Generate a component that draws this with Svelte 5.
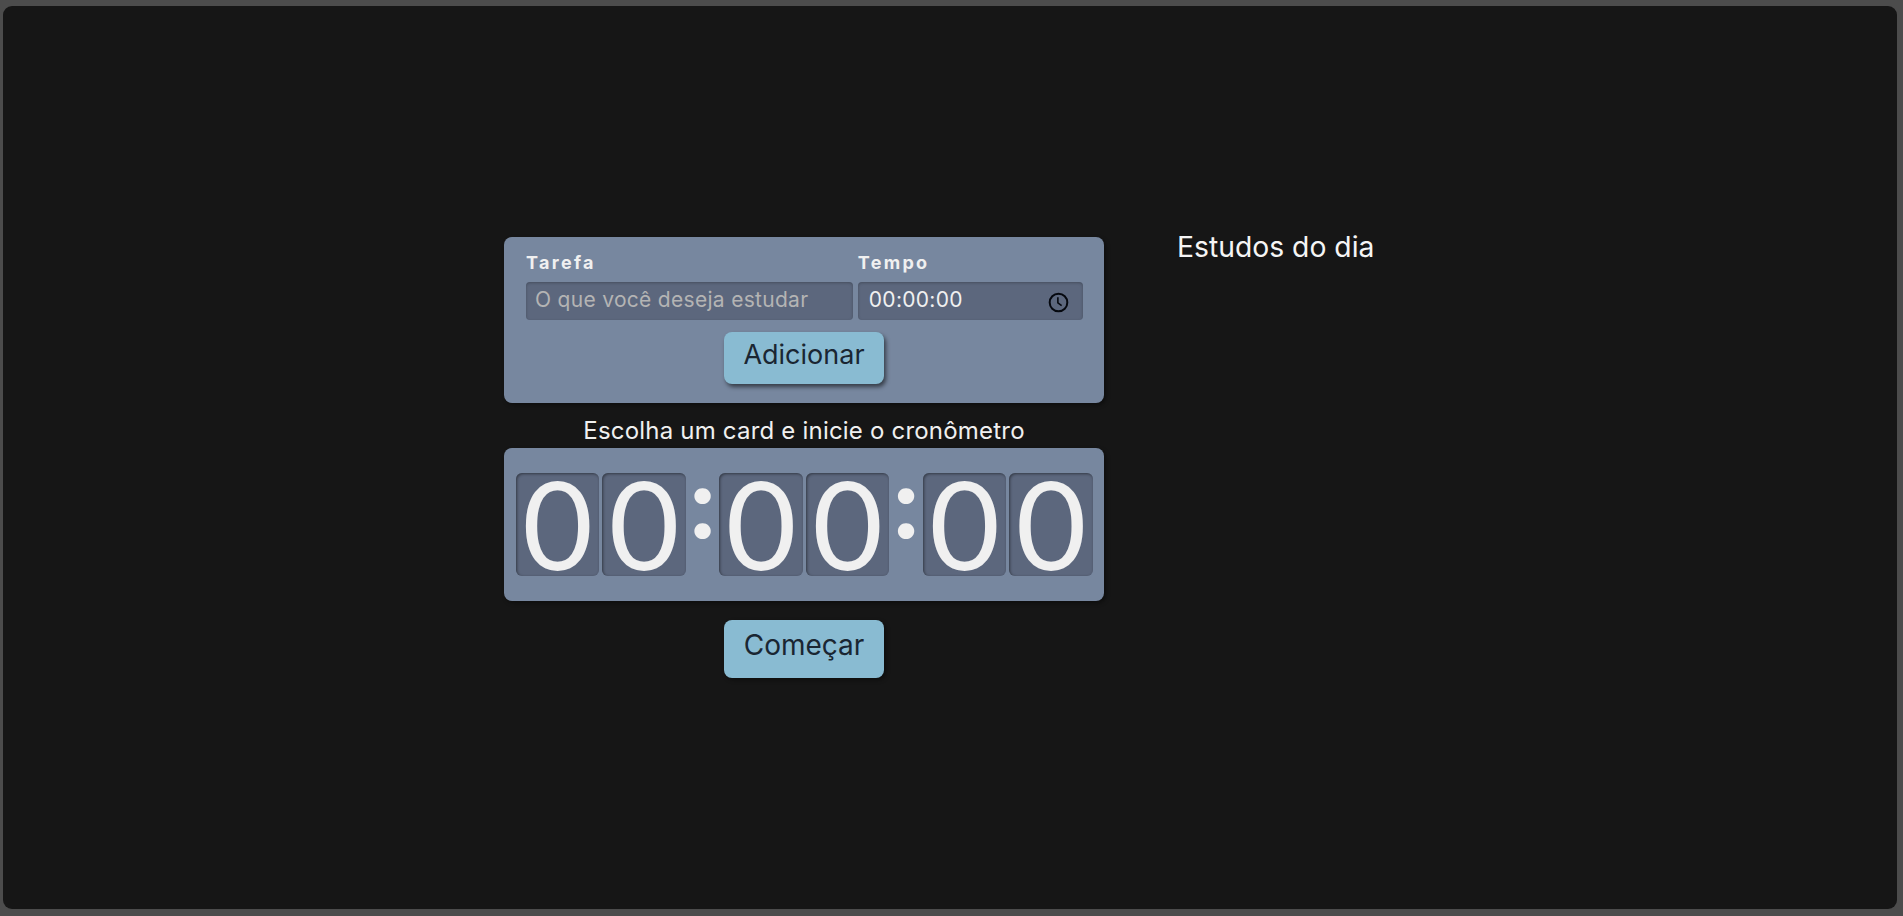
<script lang="ts">
  const fields = ['Tarefa', 'Tempo']
  const groups = [['0', '0'], ['0', '0'], ['0', '0']]
</script>

<div class="screen">
  <div class="left">
    <form class="card form">
      <div class="fields">
        <div class="field task">
          <label for="task">{fields[0]}</label>
          <input id="task" type="text" placeholder="O que você deseja estudar" />
        </div>
        <div class="field time">
          <span class="label">{fields[1]}</span>
          <div class="time-input">
            <span>00:00:00</span>
            <svg viewBox="0 0 20 20" width="21" height="21" fill="none" stroke="#05080f" stroke-width="1.9">
              <circle cx="10" cy="10" r="8.4" />
              <path d="M9.4 5v5.4l3.6 2.6" stroke-width="1.5" />
            </svg>
          </div>
        </div>
      </div>
      <button type="button" class="btn add">Adicionar</button>
    </form>

    <h2>Escolha um card e inicie o cronômetro</h2>

    <div class="card clock">
      {#each groups as group, i}
        {#if i > 0}
          <span class="colon">:</span>
        {/if}
        <div class="pair">
          {#each group as digit}
            <span class="digit">{digit}</span>
          {/each}
        </div>
      {/each}
    </div>

    <button type="button" class="btn start">Começar</button>
  </div>

  <aside>
    <h3>Estudos do dia</h3>
  </aside>
</div>

<style>
  :global(body) {
    background: #4c4c4c;
  }
  .screen {
    box-sizing: border-box;
    height: 903px;
    margin: 6px 6px 7px 3px;
    padding: 231px 0 0 501px;
    display: flex;
    gap: 73px;
    background: #161616;
    border-radius: 9px;
    font-family: "Inter", sans-serif;
    color: #f0f0f0;
  }
  .left {
    width: 600px;
    display: flex;
    flex-direction: column;
    align-items: center;
  }
  .card {
    box-sizing: border-box;
    width: 600px;
    background: #77879f;
    border-radius: 8px;
    box-shadow: 2px 2px 4px rgba(0, 0, 0, 0.4);
  }
  .form {
    height: 166px;
    padding: 15px 21px 0 22px;
  }
  .fields {
    display: flex;
    gap: 5px;
  }
  .field {
    display: flex;
    flex-direction: column;
    gap: 8px;
  }
  .task {
    width: 328px;
  }
  .time {
    width: 226px;
  }
  label,
  .label {
    font-size: 18px;
    line-height: 22px;
    font-weight: 700;
    letter-spacing: 2.3px;
    color: #f0f0f0;
  }
  input,
  .time-input {
    box-sizing: border-box;
    width: 100%;
    height: 38px;
    border: none;
    border-radius: 4px;
    background: #5c677d;
    box-shadow: inset 0 1px 3px rgba(0, 0, 0, 0.25);
    padding: 0 10px 4px;
    font-family: inherit;
    font-size: 21px;
    letter-spacing: 0.3px;
    color: #f0f0f0;
  }
  input {
    padding-left: 9px;
  }
  input::placeholder {
    color: #b4b4b4;
    opacity: 1;
  }
  .time-input {
    display: flex;
    align-items: center;
    justify-content: space-between;
    padding-left: 11px;
    padding-right: 14px;
  }
  .time-input svg {
    margin-top: 6px;
  }
  .btn {
    display: block;
    width: 160px;
    border: none;
    border-radius: 8px;
    background: #89bbd2;
    font-family: inherit;
    font-size: 27px;
    color: #1a2632;
    padding: 0 0 8px;
  }
  .add {
    height: 52px;
    margin: 12px 0 0 198px;
    box-shadow: 2px 3px 4px rgba(0, 0, 0, 0.55);
  }
  .start {
    height: 58px;
    margin-top: 19px;
    padding-bottom: 8px;
    font-size: 28px;
    box-shadow: 2px 2px 4px rgba(0, 0, 0, 0.4);
  }
  h2 {
    margin: 0;
    height: 45px;
    padding-top: 13px;
    box-sizing: border-box;
    font-size: 24px;
    line-height: 30px;
    font-weight: 400;
    letter-spacing: 0.2px;
    white-space: nowrap;
  }
  .clock {
    height: 153px;
    padding: 25px 10px 0 11.8px;
    display: flex;
    align-items: flex-start;
  }
  .pair {
    display: flex;
    gap: 3px;
  }
  .digit {
    box-sizing: border-box;
    width: 83.5px;
    height: 103px;
    border-radius: 6px;
    background: #5c677d;
    box-shadow: inset 1px 1px 3px rgba(0, 0, 0, 0.45);
    display: flex;
    justify-content: center;
    font-family: "Lato", sans-serif;
    font-size: 122px;
    line-height: 100px;
    color: #f0f0f0;
  }
  .colon {
    width: 33.5px;
    text-align: center;
    font-family: "Lato", sans-serif;
    font-size: 100px;
    line-height: 52px;
    font-weight: 900;
    color: #f0f0f0;
  }
  h3 {
    margin: 0;
    margin-top: -7px;
    font-size: 28.3px;
    line-height: 34px;
    font-weight: 400;
    color: #f5f5f5;
  }
</style>
